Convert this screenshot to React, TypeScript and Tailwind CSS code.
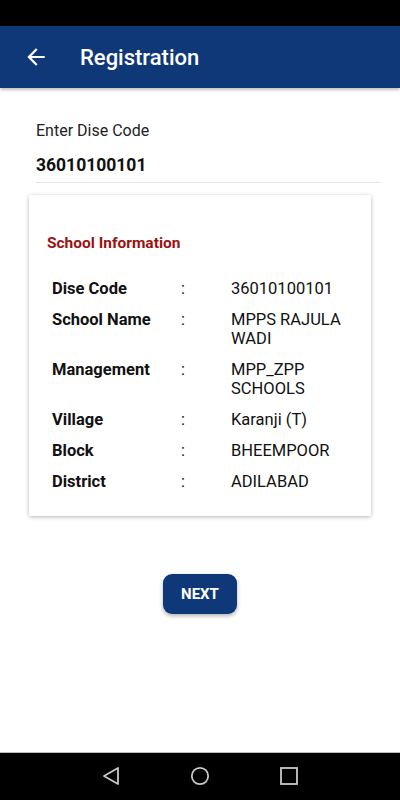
const rows = [
  { label: 'Dise Code', value: '36010100101' },
  { label: 'School Name', value: 'MPPS RAJULA WADI' },
  { label: 'Management', value: 'MPP_ZPP SCHOOLS' },
  { label: 'Village', value: 'Karanji (T)' },
  { label: 'Block', value: 'BHEEMPOOR' },
  { label: 'District', value: 'ADILABAD' },
];

const App = () => {
  return (
    <div className="h-[800px] w-[400px] flex flex-col bg-white font-[Roboto,'Liberation_Sans',sans-serif] overflow-hidden">
      {/* status bar */}
      <div className="h-[26px] bg-black"></div>

      {/* app bar */}
      <div className="relative z-10 h-[62px] bg-[#0f3878] flex items-center shadow-[0_2px_3px_rgba(0,0,0,0.25)]">
        <svg className="ml-[23px]" width="26" height="26" viewBox="0 0 24 24" fill="#ffffff">
          <path d="M20 11H7.83l5.59-5.59L12 4l-8 8 8 8 1.41-1.41L7.83 13H20v-2z" />
        </svg>
        <h1 className="ml-[31px] text-[22px] font-medium text-white">Registration</h1>
      </div>

      {/* content */}
      <div className="flex-1 flex flex-col">
        <div className="ml-[36px] mr-[18px] pt-[33px] border-b border-[#e6e6e6] pb-[5px]">
          <div className="text-[16px] leading-[20px] text-[#222]">Enter Dise Code</div>
          <div className="mt-[12px] text-[17.5px] leading-[24px] font-bold text-[#111]">36010100101</div>
        </div>

        <div className="mx-[29px] mt-[12px] bg-white rounded-[2px] shadow-[0_1px_4px_rgba(0,0,0,0.3)] pt-[38px] pb-[25px] pl-[18px]">
          <div className="text-[15.5px] leading-[20px] font-bold text-[#9b1212]">School Information</div>
          <div className="mt-[26px] pl-[5px] flex flex-col gap-[12px]">
            {rows.map((r) => (
              <div key={r.label} className="flex text-[16.5px] leading-[19px] text-[#111]">
                <div className="w-[129px] font-bold">{r.label}</div>
                <div className="w-[50px]">:</div>
                <div className="w-[122px]">{r.value}</div>
              </div>
            ))}
          </div>
        </div>

        <div className="mt-[58px] flex justify-center">
          <button className="w-[74px] h-[40px] rounded-[9px] bg-[#0f3878] text-white text-[15px] font-bold shadow-[0_2px_4px_rgba(0,0,0,0.3)]">
            NEXT
          </button>
        </div>
      </div>

      {/* nav bar */}
      <div className="h-[48px] bg-black border-t border-[#bdbdbd] flex items-center justify-center gap-[70px] pb-[1px]">
        <svg width="18" height="20" viewBox="0 0 18 20">
          <path d="M16 2 L2 10 L16 18 Z" fill="none" stroke="#c8c8c8" strokeWidth="1.8" strokeLinejoin="round" />
        </svg>
        <svg width="20" height="20" viewBox="0 0 20 20">
          <circle cx="10" cy="10" r="8.2" fill="none" stroke="#c8c8c8" strokeWidth="1.8" />
        </svg>
        <svg width="18" height="18" viewBox="0 0 18 18">
          <rect x="1" y="1" width="16" height="16" fill="none" stroke="#c8c8c8" strokeWidth="1.8" />
        </svg>
      </div>
    </div>
  );
};

export default App;
